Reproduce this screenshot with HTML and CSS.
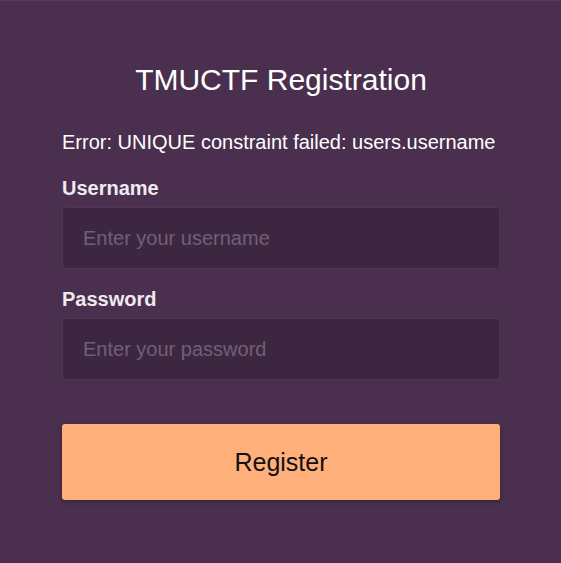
FILE: index.html
```html
<!DOCTYPE html>
<html>
<head>
<meta charset="utf-8">
<link rel="stylesheet" href="styles.css">
</head>
<body>
<div class="card">
  <h1 class="title">TMUCTF Registration</h1>
  <p class="error">Error: UNIQUE constraint failed: users.username</p>
  <form class="form">
    <label class="label label-first" for="u">Username</label>
    <input class="input" id="u" type="text" placeholder="Enter your username">
    <label class="label" for="p">Password</label>
    <input class="input" id="p" type="password" placeholder="Enter your password">
    <button class="btn" type="button">Register</button>
  </form>
</div>
</body>
</html>
```
FILE: styles.css
```css
html, body {
  margin: 0;
  padding: 0;
  background: #4a2f4e;
  font-family: "Liberation Sans", Arial, sans-serif;
}
.card {
  box-sizing: border-box;
  width: 561px;
  height: 563px;
  padding: 61px 61px 0 62px;
  background: #4a2f4e;
  border-top: 1px solid #563c5a;
}
.title {
  margin: 0;
  text-align: center;
  font-weight: normal;
  font-size: 30px;
  line-height: 36px;
  color: #ffffff;
}
.error {
  margin: 32px 0 0;
  font-size: 20px;
  line-height: 24px;
  color: #ffffff;
}
.form {
  display: flex;
  flex-direction: column;
}
.label {
  margin-top: 18px;
  font-weight: bold;
  font-size: 20px;
  line-height: 24px;
  color: #eeeaf0;
}
.label-first {
  margin-top: 22px;
}
.input {
  box-sizing: border-box;
  margin-top: 7px;
  height: 62px;
  width: 100%;
  padding: 0 20px;
  background: #3d2740;
  border: 1px solid #4e3652;
  border-radius: 3px;
  font-family: "Liberation Sans", Arial, sans-serif;
  font-size: 20px;
  color: #fff;
  outline: none;
}
.input::placeholder {
  color: #735e78;
}
.btn {
  margin-top: 44px;
  height: 76px;
  width: 100%;
  background: #ffb07a;
  border: none;
  border-radius: 3px;
  box-shadow: 0 2px 4px rgba(0,0,0,0.25);
  font-family: "Liberation Sans", Arial, sans-serif;
  font-size: 25px;
  color: #111;
}
```
